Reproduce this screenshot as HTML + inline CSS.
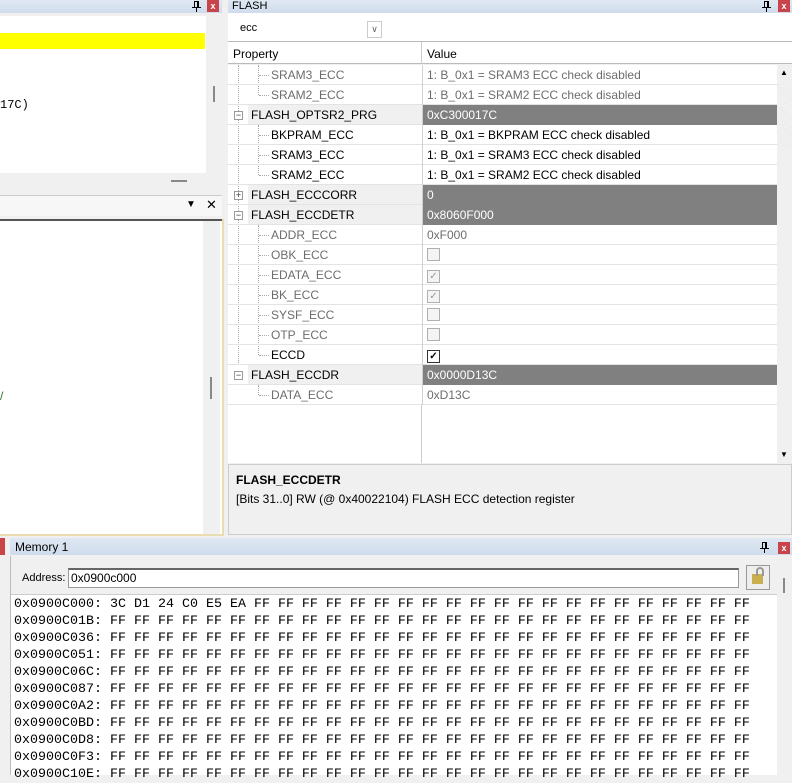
<!DOCTYPE html>
<html><head><meta charset="utf-8"><style>
*{margin:0;padding:0;box-sizing:border-box}
body{width:792px;height:775px;overflow:hidden;background:#f0f0f0;font-family:"Liberation Sans",sans-serif;font-size:12px;color:#000;position:relative}
.a{position:absolute}
.tb{background:linear-gradient(#dfe8f3,#cfdcec);}
.cls{background:#c9434a;color:#fff;font-size:9px;font-weight:bold;text-align:center;line-height:12px;width:12px;height:12px}
.row{position:absolute;left:228px;width:549px;height:20px;border-bottom:1px solid #e3e3e3}
.row .n{position:absolute;top:3px;white-space:nowrap}
.row .v{position:absolute;left:194px;top:0;width:355px;height:20px;padding:3px 0 0 4px;border-left:1px solid #d0d0d0;white-space:nowrap}
.g{color:#6d6d6d}
.hd .n{left:20px;background:#f0f0f0;height:19px;top:0;padding-top:3px;width:174px;padding-left:3px}
.hd .v{background:#808080;color:#fff}
.cb{display:inline-block;width:13px;height:13px;border:1px solid #b0b0b0;background:#f4f4f4;margin-top:0px;font-size:10px;line-height:11px;text-align:center;color:#999}
.hex{position:absolute;left:14px;font-family:"Liberation Mono",monospace;font-size:13.33px;white-space:pre;line-height:17px}
.dot{position:absolute;border-left:1px dotted #aaa}
.dh{position:absolute;border-top:1px dotted #aaa;width:10px}
.pm{position:absolute;width:9px;height:9px;border:1px solid #999;background:#fff;font-size:9px;line-height:7px;text-align:center;color:#333}
</style></head><body>
<svg width="0" height="0" style="position:absolute"><defs><symbol id="pin" viewBox="0 0 9 11"><rect x="2" y="0" width="5" height="1" fill="#000"/><rect x="2" y="0" width="1" height="6" fill="#000"/><rect x="5" y="0" width="2" height="6" fill="#000"/><rect x="0" y="6" width="9" height="1" fill="#000"/><rect x="4" y="7" width="1" height="4" fill="#000"/></symbol></defs></svg>
<!-- left top panel -->
<div class="a tb" style="left:0;top:0;width:222px;height:13px"></div>
<svg class="a" style="left:192px;top:1px" width="9" height="11"><use href="#pin"/></svg>
<div class="a cls" style="left:207px;top:0">x</div>
<div class="a" style="left:0;top:16px;width:206px;height:157px;background:#fff"></div>
<div class="a" style="left:0;top:33px;width:205px;height:16px;background:#ffff00"></div>
<div class="a" style="left:0;top:98px;font-family:'Liberation Mono',monospace;font-size:12px">17C)</div>
<div class="a" style="left:206px;top:16px;width:16px;height:157px;background:#f0f0f0"></div>
<div class="a" style="left:213px;top:86px;width:2px;height:16px;background:#888"></div>
<div class="a" style="left:171px;top:180px;width:16px;height:2px;background:#888"></div>
<!-- left bottom panel -->
<div class="a" style="left:0;top:195px;width:222px;height:1px;background:#ccc"></div>
<div class="a" style="left:0;top:196px;width:222px;height:20px;background:#f7f7f7"></div>
<div class="a" style="left:186px;top:199px;font-size:10px">&#9660;</div>
<div class="a" style="left:206px;top:197px;font-size:13px">&#x2715;</div>
<div class="a" style="left:0;top:219px;width:224px;height:317px;border:2px solid #e8dcb0;border-left:none;background:#fff"></div>
<div class="a" style="left:0;top:219px;width:222px;height:2px;background:#555"></div>
<div class="a" style="left:203px;top:221px;width:17px;height:313px;background:#f0f0f0"></div>
<div class="a" style="left:210px;top:377px;width:2px;height:22px;background:#888"></div>
<div class="a" style="left:0;top:389px;color:#2a7a2a;font-size:12px">/</div>
<!-- FLASH panel -->
<div class="a tb" style="left:228px;top:0;width:564px;height:13px"></div>
<div class="a" style="left:232px;top:0;font-size:11px">FLASH</div>
<svg class="a" style="left:762px;top:1px" width="9" height="11"><use href="#pin"/></svg>
<div class="a cls" style="left:778px;top:0">x</div>
<div class="a" style="left:228px;top:13px;width:564px;height:28px;background:#fff"></div>
<div class="a" style="left:240px;top:22px;font-size:11px">ecc</div>
<div class="a" style="left:367px;top:21px;width:15px;height:17px;border:1px solid #ccc;font-size:9px;text-align:center;line-height:15px;color:#666">&#8744;</div>
<div class="a" style="left:228px;top:41px;width:564px;height:1px;background:#bbb"></div>
<div class="a" style="left:228px;top:42px;width:564px;height:22px;background:#fff;border-bottom:1px solid #bbb"></div>
<div class="a" style="left:233px;top:47px">Property</div>
<div class="a" style="left:421px;top:42px;width:1px;height:22px;background:#ccc"></div>
<div class="a" style="left:427px;top:47px">Value</div>
<div class="a" style="left:228px;top:65px;width:549px;height:398px;background:#fff"></div>
<div class="a" style="left:421px;top:405px;width:1px;height:58px;background:#ccc"></div>
<div class="a" style="left:777px;top:65px;width:15px;height:398px;background:#f0f0f0"></div>
<div class="a" style="left:780px;top:68px;font-size:8px">&#9650;</div>
<div class="a" style="left:780px;top:450px;font-size:8px">&#9660;</div>
<div class="a" style="left:777px;top:82px;width:15px;height:65px;background:repeating-linear-gradient(45deg,#e8e8e8 0 1px,#f6f6f6 1px 2px)"></div>
<!-- tree lines -->
<div class="dot" style="left:238px;top:65px;height:300px"></div>
<div class="dot" style="left:258px;top:65px;height:30px"></div>
<div class="dot" style="left:258px;top:125px;height:50px"></div>
<div class="dot" style="left:258px;top:225px;height:130px"></div>
<div class="dot" style="left:258px;top:385px;height:10px"></div>

<div class="row" style="top:65px"><div class="dh" style="left:31px;top:10px"></div><div class="n g" style="left:43px">SRAM3_ECC</div><div class="v g">1: B_0x1 = SRAM3 ECC check disabled</div></div>
<div class="row" style="top:85px"><div class="dh" style="left:31px;top:10px"></div><div class="n g" style="left:43px">SRAM2_ECC</div><div class="v g">1: B_0x1 = SRAM2 ECC check disabled</div></div>
<div class="row hd" style="top:105px"><div class="pm" style="left:6px;top:6px">&#8722;</div><div class="n">FLASH_OPTSR2_PRG</div><div class="v">0xC300017C</div></div>
<div class="row" style="top:125px"><div class="dh" style="left:31px;top:10px"></div><div class="n" style="left:43px">BKPRAM_ECC</div><div class="v">1: B_0x1 = BKPRAM ECC check disabled</div></div>
<div class="row" style="top:145px"><div class="dh" style="left:31px;top:10px"></div><div class="n" style="left:43px">SRAM3_ECC</div><div class="v">1: B_0x1 = SRAM3 ECC check disabled</div></div>
<div class="row" style="top:165px"><div class="dh" style="left:31px;top:10px"></div><div class="n" style="left:43px">SRAM2_ECC</div><div class="v">1: B_0x1 = SRAM2 ECC check disabled</div></div>
<div class="row hd" style="top:185px"><div class="pm" style="left:6px;top:6px">+</div><div class="n">FLASH_ECCCORR</div><div class="v">0</div></div>
<div class="row hd" style="top:205px"><div class="pm" style="left:6px;top:6px">&#8722;</div><div class="n">FLASH_ECCDETR</div><div class="v">0x8060F000</div></div>
<div class="row" style="top:225px"><div class="dh" style="left:31px;top:10px"></div><div class="n g" style="left:43px">ADDR_ECC</div><div class="v g">0xF000</div></div>
<div class="row" style="top:245px"><div class="dh" style="left:31px;top:10px"></div><div class="n g" style="left:43px">OBK_ECC</div><div class="v"><span class="cb"></span></div></div>
<div class="row" style="top:265px"><div class="dh" style="left:31px;top:10px"></div><div class="n g" style="left:43px">EDATA_ECC</div><div class="v"><span class="cb">&#10003;</span></div></div>
<div class="row" style="top:285px"><div class="dh" style="left:31px;top:10px"></div><div class="n g" style="left:43px">BK_ECC</div><div class="v"><span class="cb">&#10003;</span></div></div>
<div class="row" style="top:305px"><div class="dh" style="left:31px;top:10px"></div><div class="n g" style="left:43px">SYSF_ECC</div><div class="v"><span class="cb"></span></div></div>
<div class="row" style="top:325px"><div class="dh" style="left:31px;top:10px"></div><div class="n g" style="left:43px">OTP_ECC</div><div class="v"><span class="cb"></span></div></div>
<div class="row" style="top:345px"><div class="dh" style="left:31px;top:10px"></div><div class="n" style="left:43px">ECCD</div><div class="v"><span class="cb" style="border-color:#333;background:#fff;color:#000;font-weight:bold">&#10003;</span></div></div>
<div class="row hd" style="top:365px"><div class="pm" style="left:6px;top:6px">&#8722;</div><div class="n">FLASH_ECCDR</div><div class="v">0x0000D13C</div></div>
<div class="row" style="top:385px"><div class="dh" style="left:31px;top:10px"></div><div class="n g" style="left:43px">DATA_ECC</div><div class="v g">0xD13C</div></div>
<!-- description -->
<div class="a" style="left:228px;top:464px;width:564px;height:71px;border:1px solid #ccc;background:#f0f0f0"></div>
<div class="a" style="left:236px;top:473px;font-weight:bold">FLASH_ECCDETR</div>
<div class="a" style="left:236px;top:492px">[Bits 31..0] RW (@ 0x40022104) FLASH ECC detection register</div>
<!-- memory -->
<div class="a" style="left:0;top:538px;width:5px;height:17px;background:#c9434a"></div>
<div class="a tb" style="left:10px;top:538px;width:782px;height:17px"></div>
<div class="a" style="left:15px;top:540px;font-size:12px">Memory 1</div>
<svg class="a" style="left:760px;top:542px" width="9" height="11"><use href="#pin"/></svg>
<div class="a cls" style="left:778px;top:542px">x</div>
<div class="a" style="left:10px;top:556px;width:782px;height:219px;border-left:1px solid #bbb;background:#f0f0f0"></div>
<div class="a" style="left:22px;top:572px;font-size:11px">Address:</div>
<div class="a" style="left:68px;top:568px;width:671px;height:20px;border:1px solid #999;border-top:2px solid #666;background:#fff;padding:1px 2px">0x0900c000</div>
<div class="a" style="left:746px;top:565px;width:24px;height:25px;border:1px solid #999;background:#eee"></div>
<div class="a" style="left:752px;top:574px;width:11px;height:10px;background:#c8b050"></div>
<div class="a" style="left:756px;top:567px;width:8px;height:9px;border:2px solid #999;border-bottom:none;border-radius:4px 4px 0 0"></div>
<div class="a" style="left:783px;top:578px;width:2px;height:15px;background:#888"></div>
<div class="a" style="left:11px;top:594px;width:766px;height:181px;background:#fff;border-top:1px solid #ccc"></div>
<div class="hex" style="top:596px">0x0900C000: 3C D1 24 C0 E5 EA FF FF FF FF FF FF FF FF FF FF FF FF FF FF FF FF FF FF FF FF FF
0x0900C01B: FF FF FF FF FF FF FF FF FF FF FF FF FF FF FF FF FF FF FF FF FF FF FF FF FF FF FF
0x0900C036: FF FF FF FF FF FF FF FF FF FF FF FF FF FF FF FF FF FF FF FF FF FF FF FF FF FF FF
0x0900C051: FF FF FF FF FF FF FF FF FF FF FF FF FF FF FF FF FF FF FF FF FF FF FF FF FF FF FF
0x0900C06C: FF FF FF FF FF FF FF FF FF FF FF FF FF FF FF FF FF FF FF FF FF FF FF FF FF FF FF
0x0900C087: FF FF FF FF FF FF FF FF FF FF FF FF FF FF FF FF FF FF FF FF FF FF FF FF FF FF FF
0x0900C0A2: FF FF FF FF FF FF FF FF FF FF FF FF FF FF FF FF FF FF FF FF FF FF FF FF FF FF FF
0x0900C0BD: FF FF FF FF FF FF FF FF FF FF FF FF FF FF FF FF FF FF FF FF FF FF FF FF FF FF FF
0x0900C0D8: FF FF FF FF FF FF FF FF FF FF FF FF FF FF FF FF FF FF FF FF FF FF FF FF FF FF FF
0x0900C0F3: FF FF FF FF FF FF FF FF FF FF FF FF FF FF FF FF FF FF FF FF FF FF FF FF FF FF FF
0x0900C10E: FF FF FF FF FF FF FF FF FF FF FF FF FF FF FF FF FF FF FF FF FF FF FF FF FF FF FF</div>
</body></html>
